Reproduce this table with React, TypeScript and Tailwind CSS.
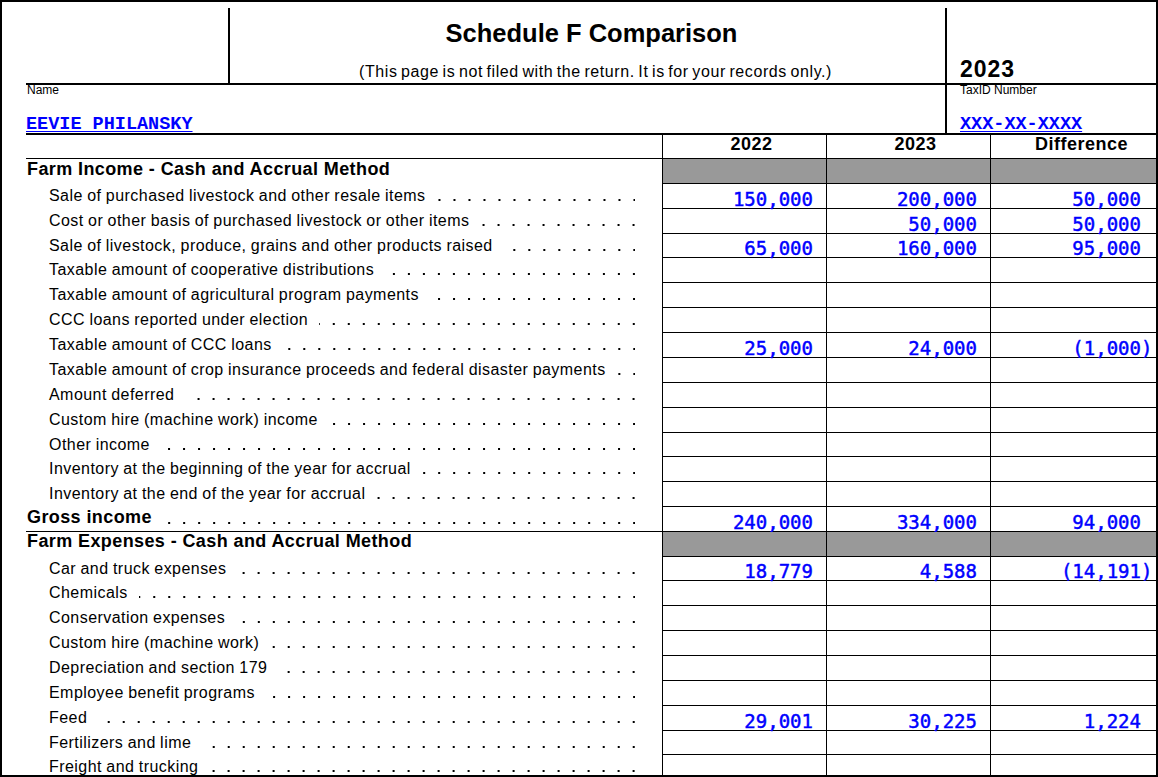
import React from "react";

type V = [string, string, string];
type Row =
  | { kind: "section"; label: string; h: 24 | 25; pt: string }
  | { kind: "item"; label: string; h: 24 | 25; v?: V }
  | { kind: "total"; label: string; h: 24 | 25; v: V };

const H: Record<number, string> = { 24: "h-[24px]", 25: "h-[25px]" };

const rows: Row[] = [
  { kind: "section", label: "Farm Income - Cash and Accrual Method", h: 25, pt: "pt-[1px]" },
  { kind: "item", label: "Sale of purchased livestock and other resale items", h: 25, v: ["150,000", "200,000", "50,000"] },
  { kind: "item", label: "Cost or other basis of purchased livestock or other items", h: 25, v: ["", "50,000", "50,000"] },
  { kind: "item", label: "Sale of livestock, produce, grains and other products raised", h: 24, v: ["65,000", "160,000", "95,000"] },
  { kind: "item", label: "Taxable amount of cooperative distributions", h: 25 },
  { kind: "item", label: "Taxable amount of agricultural program payments", h: 25 },
  { kind: "item", label: "CCC loans reported under election", h: 25 },
  { kind: "item", label: "Taxable amount of CCC loans", h: 25, v: ["25,000", "24,000", "(1,000)"] },
  { kind: "item", label: "Taxable amount of crop insurance proceeds and federal disaster payments", h: 25 },
  { kind: "item", label: "Amount deferred", h: 25 },
  { kind: "item", label: "Custom hire (machine work) income", h: 25 },
  { kind: "item", label: "Other income", h: 24 },
  { kind: "item", label: "Inventory at the beginning of the year for accrual", h: 25 },
  { kind: "item", label: "Inventory at the end of the year for accrual", h: 25 },
  { kind: "total", label: "Gross income", h: 25, v: ["240,000", "334,000", "94,000"] },
  { kind: "section", label: "Farm Expenses - Cash and Accrual Method", h: 25, pt: "pt-0" },
  { kind: "item", label: "Car and truck expenses", h: 24, v: ["18,779", "4,588", "(14,191)"] },
  { kind: "item", label: "Chemicals", h: 25 },
  { kind: "item", label: "Conservation expenses", h: 25 },
  { kind: "item", label: "Custom hire (machine work)", h: 25 },
  { kind: "item", label: "Depreciation and section 179", h: 25 },
  { kind: "item", label: "Employee benefit programs", h: 25 },
  { kind: "item", label: "Feed", h: 25, v: ["29,001", "30,225", "1,224"] },
  { kind: "item", label: "Fertilizers and lime", h: 24 },
  { kind: "item", label: "Freight and trucking", h: 25 },
];

const COLS = ["w-[164px] pr-[13px]", "w-[164px] pr-[13px]", "flex-1 pr-[15px]"];

function Leader({ top }: { top: string }) {
  return (
    <span
      className={`ml-[11px] min-w-0 flex-1 self-stretch bg-[linear-gradient(90deg,transparent_13px,#000_13px)] bg-size-[15px_2px] bg-no-repeat bg-repeat-x ${top}`}
    />
  );
}

function Value({ v }: { v: string }) {
  if (v.startsWith("(")) {
    return (
      <span>
        {v.slice(0, -1)}
        <span className="mr-[-11.44px]">)</span>
      </span>
    );
  }
  return <span>{v}</span>;
}

function ValueCells({ v, gray }: { v?: V; gray?: boolean }) {
  return (
    <>
      {COLS.map((c, i) => (
        <div
          key={i}
          className={`${c} flex items-end justify-end border-b border-l border-black font-['DejaVu_Sans_Mono',monospace] text-[19px] font-normal leading-[18px] text-[#0000ff] [-webkit-text-stroke:0.45px_#0000ff] ${
            gray ? "bg-[#999999]" : ""
          }`}
        >
          {v && v[i] ? <Value v={v[i]} /> : null}
        </div>
      ))}
    </>
  );
}

function TableRow({ r }: { r: Row }) {
  if (r.kind === "section") {
    return (
      <div className={`flex ${H[r.h]}`}>
        <div
          className={`w-[636px] shrink-0 whitespace-nowrap pl-[1px] ${r.pt} text-[18px] font-bold leading-[18px] tracking-[0.4px]`}
        >
          {r.label}
        </div>
        <ValueCells gray />
      </div>
    );
  }
  if (r.kind === "total") {
    return (
      <div className={`flex ${H[r.h]}`}>
        <div className="flex w-[636px] shrink-0 items-start border-b border-black pl-[1px] pr-[27px] pt-[1px] text-[18px] font-bold leading-[18px] tracking-[0.4px]">
          <span className="whitespace-nowrap">{r.label}</span>
          <Leader top="bg-position-[right_0_top_14px]" />
        </div>
        <ValueCells v={r.v} />
      </div>
    );
  }
  return (
    <div className={`flex ${H[r.h]}`}>
      <div className="flex w-[636px] shrink-0 items-start pl-[23px] pr-[27px] pt-[3px] text-[16px] leading-[17px] tracking-[0.45px] [word-spacing:-0.5px]">
        <span className="whitespace-nowrap">{r.label}</span>
        <Leader top="bg-position-[right_0_top_12px]" />
      </div>
      <ValueCells v={r.v} />
    </div>
  );
}

export default function App() {
  return (
    <div className="h-[777px] w-[1158px] overflow-hidden border-2 border-black bg-white font-['Liberation_Sans',Arial,sans-serif] text-black">
      <div className="pl-[24px]">
        {/* Top title band */}
        <div className="flex h-[81px]">
          <div className="w-[202px] shrink-0" />
          <div className="mt-[6px] w-[2px] shrink-0 bg-black" />
          <div className="flex w-[715px] shrink-0 flex-col items-center">
            <div className="mt-[18px] pl-[8px] text-[25.5px] font-bold leading-[26px]">
              Schedule F Comparison
            </div>
            <div className="mt-[18px] pl-[16px] text-[16px] leading-[16px] tracking-[0.6px] [word-spacing:-1.5px] whitespace-nowrap">
              (This page is not filed with the return. It is for your records only.)
            </div>
          </div>
          <div className="mt-[6px] w-[2px] shrink-0 bg-black" />
          <div className="flex flex-1 flex-col justify-end pb-[2px] pl-[13px]">
            <div className="text-[23px] font-bold leading-[23px] tracking-[1px]">2023</div>
          </div>
        </div>
        <div className="h-[2px] bg-black" />
        {/* Name / TaxID band */}
        <div className="flex h-[48px]">
          <div className="flex w-[919px] shrink-0 flex-col justify-between">
            <div className="-mt-[1px] pl-[1px] text-[12px] leading-[12px]">Name</div>
            <div className="font-['Liberation_Mono','Courier_New',monospace] text-[18.5px] font-bold leading-[16px] text-[#0000ff] underline underline-offset-[2px]">
              EEVIE PHILANSKY
            </div>
          </div>
          <div className="w-[2px] shrink-0 bg-black" />
          <div className="flex flex-1 flex-col justify-between pl-[13px]">
            <div className="-mt-[1px] text-[12px] leading-[12px]">TaxID Number</div>
            <div className="font-['Liberation_Mono','Courier_New',monospace] text-[18.5px] font-bold leading-[16px] text-[#0000ff] underline underline-offset-[2px]">
              XXX-XX-XXXX
            </div>
          </div>
        </div>
        <div className="h-[2px] bg-black" />
        {/* Column header */}
        <div className="flex h-[24px]">
          <div className="w-[636px] shrink-0 border-b border-black" />
          {["2022", "2023", "Difference"].map((t, i) => (
            <div
              key={t}
              className={`${i === 2 ? "flex-1 pl-[16px]" : "w-[164px] pl-[14px]"} border-b border-l border-black text-center text-[18px] font-bold leading-[18px] tracking-[0.5px]`}
            >
              {t}
            </div>
          ))}
        </div>
        {rows.map((r, i) => (
          <TableRow key={i} r={r} />
        ))}
      </div>
    </div>
  );
}
